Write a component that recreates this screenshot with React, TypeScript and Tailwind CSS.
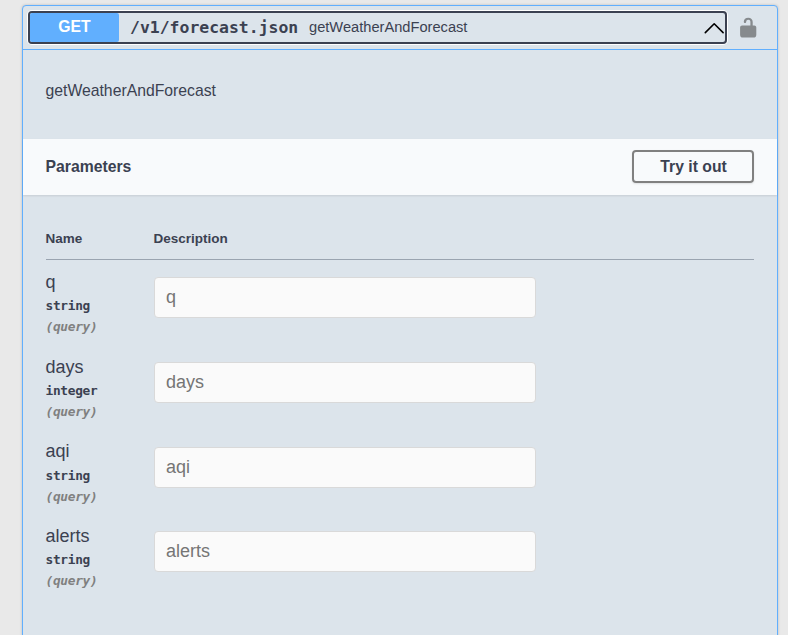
const params = [
  { name: "q", type: "string" },
  { name: "days", type: "integer" },
  { name: "aqi", type: "string" },
  { name: "alerts", type: "string" },
];

function Summary() {
  return (
    <div className="flex h-11 items-center border-b border-[#61affe] pl-[5px]">
      <button
        type="button"
        className="flex h-[33px] w-[699px] items-center rounded-[4px] border-2 border-[#3b4151] shadow-[0_0_0_1px_#ffffff]"
      >
        <span className="flex h-[29px] w-[89px] items-center justify-center rounded-[2px] bg-[#61affe] pb-0.5 text-[15.75px] font-bold text-white">
          GET
        </span>
        <span className="ml-[11px] w-[168px] font-['DejaVu_Sans_Mono',monospace] text-[16.45px] font-bold leading-[29px] whitespace-nowrap">
          /v1/forecast.json
        </span>
        <span className="ml-[11px] text-[14.65px] leading-[29px]">getWeatherAndForecast</span>
        <svg className="ml-auto h-[22px] w-[22px]" viewBox="0 0 22 22" fill="none" stroke="#000" strokeWidth="1.6">
          <path d="M2.3 15.6 L11.2 6.8 L20.1 15.6" strokeLinecap="round" strokeLinejoin="round" />
        </svg>
      </button>
      <svg className="ml-[12px] h-[22px] w-[18px]" viewBox="0 0 18 22" fill="#868a8d">
        <path d="M15.3 8.5 H13.7 V5 C13.7 2.4 12 0.7 9.2 0.7 C6.6 0.7 4.9 2.2 4.8 4.5 C4.8 5.5 5.2 6.1 6 6.1 C6.8 6.1 7.1 5.6 7.2 4.8 C7.3 3.4 8 2.7 9.3 2.7 C10.7 2.7 11.4 3.6 11.4 5 V8.5 H3.1 C2 8.5 1.1 9.3 1.1 10.4 V17.7 C1.1 19.6 2.2 20.6 3.9 20.6 H14.5 C16.2 20.6 17.3 19.6 17.3 17.7 V10.4 C17.3 9.3 16.4 8.5 15.3 8.5 Z" />
      </svg>
    </div>
  );
}

function ParamRow({ name, type }: { name: string; type: string }) {
  return (
    <div className="flex h-[84.6px]">
      <div className="w-[108.5px] pt-[11.6px]">
        <div className="text-[18px] leading-[21px]">{name}</div>
        <div className="pt-[5.4px] font-['DejaVu_Sans_Mono',monospace] text-[12.8px] font-bold leading-[16px] tracking-[-0.28px]">
          {type}
        </div>
        <div className="pt-[5px] font-['DejaVu_Sans_Mono',monospace] text-[12.8px] font-bold italic leading-[16px] tracking-[-0.28px] text-[#808080]">
          (query)
        </div>
      </div>
      <input
        type="text"
        placeholder={name}
        className="mt-[17px] h-[41px] w-[382px] rounded-[4px] border border-[#d9d9d9] bg-[#fafafa] px-[11px] text-[18px] placeholder:text-[#757575]"
      />
    </div>
  );
}

export default function App() {
  return (
    <div className="h-[635px] overflow-hidden bg-[#e9e9e9] pt-[5px] pl-[22px] font-['Liberation_Sans',Arial,sans-serif] text-[#3b4151]">
      <div className="h-[700px] w-[756px] rounded-[4px] border border-[#61affe] bg-[#dce4eb] shadow-[0_0_3px_rgba(0,0,0,0.19)]">
        <Summary />
        <p className="h-[89px] px-[22.5px] pt-[32px] text-[15.75px] leading-[18px]">getWeatherAndForecast</p>
        <div className="flex h-[56px] items-center justify-between bg-[#f8fafc] pr-[23px] pl-[22.5px] shadow-[0_1px_2px_rgba(0,0,0,0.1)]">
          <h4 className="text-[15.75px] font-bold">Parameters</h4>
          <button
            type="button"
            className="mb-0.5 h-[33px] w-[122px] rounded-[4px] border-2 border-[#808080] pt-px pl-px text-[15.75px] font-bold shadow-[0_1px_2px_rgba(0,0,0,0.1)]"
          >
            Try it out
          </button>
        </div>
        <div className="pt-[36px] pr-[23px] pl-[22.5px]">
          <div className="mb-[0.38px] flex h-[29px] border-b border-[#9aa4b0] text-[13.5px] font-bold leading-[16px]">
            <span className="w-[108px]">Name</span>
            <span>Description</span>
          </div>
          {params.map((p) => (
            <ParamRow key={p.name} name={p.name} type={p.type} />
          ))}
        </div>
      </div>
    </div>
  );
}
